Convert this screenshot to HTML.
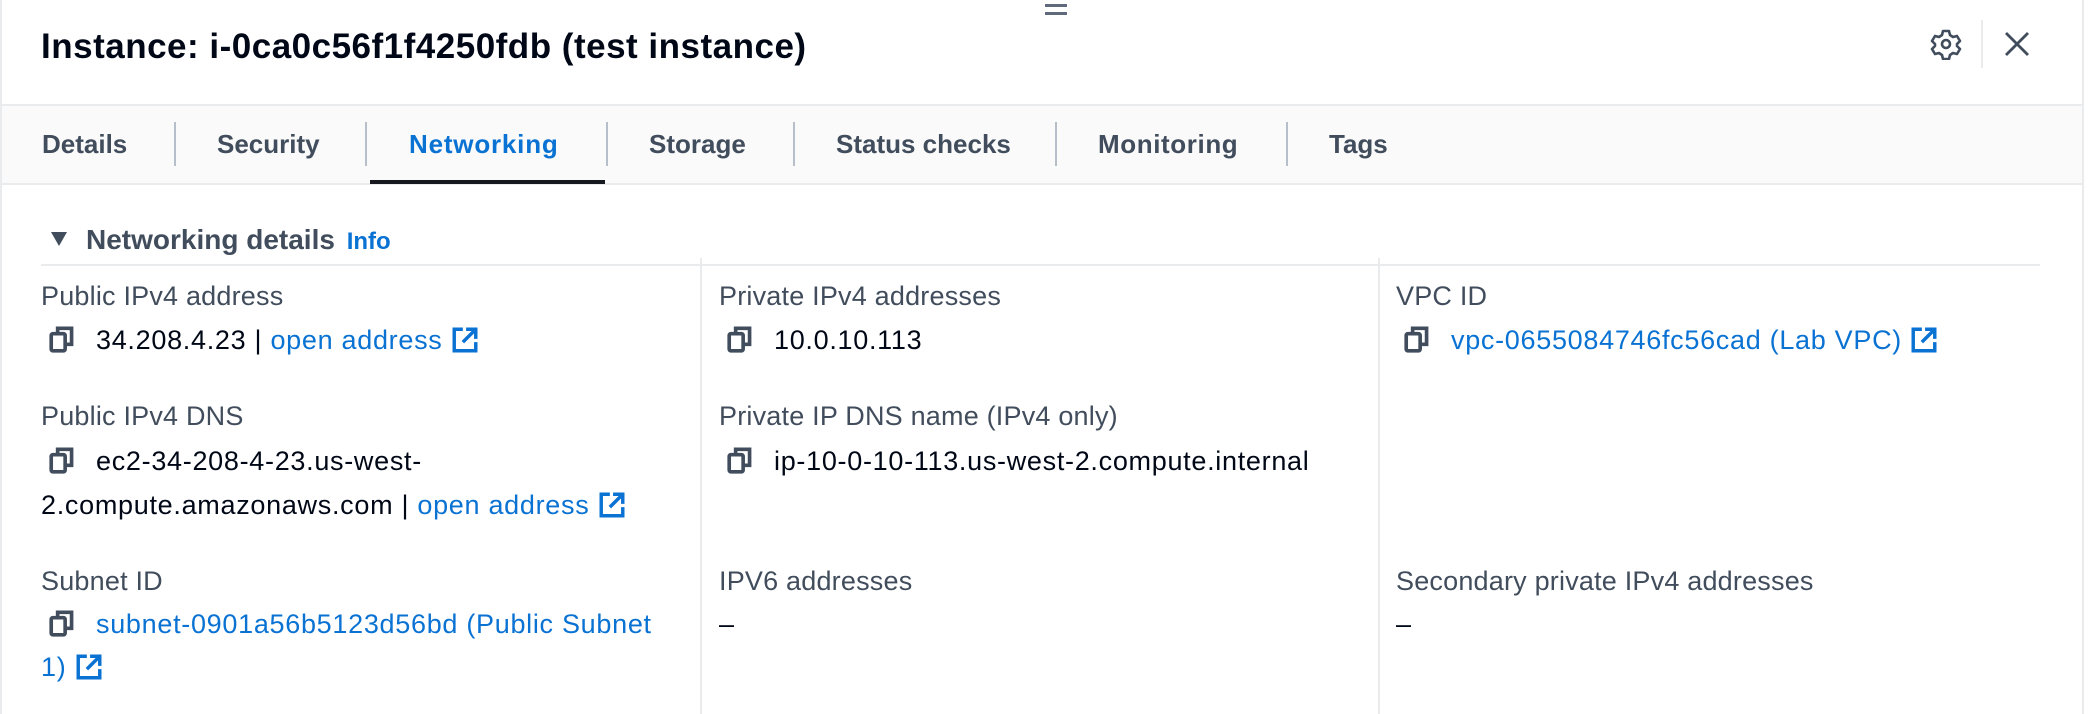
<!DOCTYPE html>
<html><head><meta charset="utf-8"><style>
*{margin:0;padding:0;box-sizing:border-box}
body{width:2090px;height:714px;background:#fff;font-family:"Liberation Sans",sans-serif;position:relative;overflow:hidden;color:#000716}
.a{position:absolute;white-space:nowrap;line-height:32px}
.t{font-size:35px;font-weight:bold;color:#000716;letter-spacing:0.5px}
.tab{font-size:26px;font-weight:bold;color:#414d5c;top:128px}
.div{position:absolute;top:122px;width:2px;height:44px;background:#b6bec9}
.lab{font-size:27px;color:#414d5c;letter-spacing:0.2px}
.val{font-size:27px;color:#000716;letter-spacing:0.7px}
.lnk{color:#0972d3}
.ic{display:inline-block;vertical-align:-5px}
.cpi{margin-right:18px}
</style></head><body>
<div style="position:absolute;left:0;top:0;width:2px;height:714px;background:#e9ebed"></div>
<div style="position:absolute;left:2082px;top:0;width:2px;height:714px;background:#e9ebed"></div>
<div style="position:absolute;left:1045px;top:4px;width:22px;height:3px;background:#5f6b7a"></div>
<div style="position:absolute;left:1045px;top:12px;width:22px;height:3px;background:#5f6b7a"></div>
<div class="a t" style="left:41px;top:31px">Instance: i-0ca0c56f1f4250fdb (test instance)</div>
<svg style="position:absolute;left:1930px;top:28px" width="32" height="32" viewBox="0 0 32 32"><path d="M13 3h6l1 4 3 2 4-1 3 5-3 3v2l3 3-3 5-4-1-3 2-1 4h-6l-1-4-3-2-4 1-3-5 3-3v-2l-3-3 3-5 4 1 3-2z" fill="none" stroke="#414d5c" stroke-width="2.6" stroke-linejoin="round"/><circle cx="16" cy="16" r="4" fill="none" stroke="#414d5c" stroke-width="2.6"/></svg>
<div style="position:absolute;left:1981px;top:20px;width:2px;height:48px;background:#e9ebed"></div>
<svg style="position:absolute;left:2003px;top:30px" width="28" height="28" viewBox="0 0 28 28"><path d="M3 3L25 25M25 3L3 25" stroke="#414d5c" stroke-width="2.8"/></svg>
<div style="position:absolute;left:2px;top:104px;width:2080px;height:81px;background:#fafafa;border-top:2px solid #e9ebed;border-bottom:2px solid #e9ebed"></div>
<div class="a tab" style="left:42px">Details</div>
<div class="div" style="left:174px"></div>
<div class="a tab" style="left:217px">Security</div>
<div class="div" style="left:365px"></div>
<div class="a tab" style="left:409px;color:#0972d3;letter-spacing:0.8px">Networking</div>
<div style="position:absolute;left:370px;top:180px;width:235px;height:4px;background:#16191f"></div>
<div class="div" style="left:606px"></div>
<div class="a tab" style="left:649px">Storage</div>
<div class="div" style="left:793px"></div>
<div class="a tab" style="left:836px">Status checks</div>
<div class="div" style="left:1055px"></div>
<div class="a tab" style="left:1098px;letter-spacing:0.6px">Monitoring</div>
<div class="div" style="left:1286px"></div>
<div class="a tab" style="left:1329px">Tags</div>
<svg style="position:absolute;left:50px;top:231px" width="18" height="16" viewBox="0 0 18 16"><path d="M1 1H17L9 15Z" fill="#414d5c"/></svg>
<div class="a" style="left:86px;top:224px;font-size:28px;font-weight:bold;color:#414d5c">Networking details <span style="font-size:24px;color:#0972d3;margin-left:4px">Info</span></div>
<div style="position:absolute;left:41px;top:264px;width:1999px;height:2px;background:#e9ebed"></div>
<div style="position:absolute;left:700px;top:258px;width:2px;height:456px;background:#e9ebed"></div>
<div style="position:absolute;left:1378px;top:258px;width:2px;height:456px;background:#e9ebed"></div>

<svg width="0" height="0" style="position:absolute"><defs>
<symbol id="cp" viewBox="0 0 28 28"><rect x="3" y="9" width="13" height="16" rx="1.5" fill="none" stroke="#414d5c" stroke-width="3.4"/><path d="M9 8V4h13v15h-5" fill="none" stroke="#414d5c" stroke-width="3.4"/></symbol>
<symbol id="ex" viewBox="0 0 26 26"><path d="M11 3H3v20h20v-8" fill="none" stroke="#0972d3" stroke-width="3.2"/><path d="M14 3h9v9M23 3L11 15" fill="none" stroke="#0972d3" stroke-width="3.2"/></symbol>
</defs></svg>

<div class="a lab" style="left:41px;top:280px">Public IPv4 address</div>
<div class="a val" style="left:48px;top:324px"><svg class="ic cpi" width="30" height="30"><use href="#cp"/></svg>34.208.4.23 | <span class="lnk">open address</span> <svg class="ic" width="28" height="28"><use href="#ex"/></svg></div>
<div class="a lab" style="left:41px;top:400px">Public IPv4 DNS</div>
<div class="a val" style="left:48px;top:445px"><svg class="ic cpi" width="30" height="30"><use href="#cp"/></svg>ec2-34-208-4-23.us-west-</div>
<div class="a val" style="left:41px;top:489px">2.compute.amazonaws.com | <span class="lnk">open address</span> <svg class="ic" width="28" height="28"><use href="#ex"/></svg></div>
<div class="a lab" style="left:41px;top:565px">Subnet ID</div>
<div class="a val lnk" style="left:48px;top:608px"><svg class="ic cpi" width="30" height="30"><use href="#cp"/></svg>subnet-0901a56b5123d56bd (Public Subnet</div>
<div class="a val lnk" style="left:41px;top:651px">1) <svg class="ic" width="28" height="28"><use href="#ex"/></svg></div>
<div class="a lab" style="left:719px;top:280px">Private IPv4 addresses</div>
<div class="a val" style="left:726px;top:324px"><svg class="ic cpi" width="30" height="30"><use href="#cp"/></svg>10.0.10.113</div>
<div class="a lab" style="left:719px;top:400px">Private IP DNS name (IPv4 only)</div>
<div class="a val" style="left:726px;top:445px"><svg class="ic cpi" width="30" height="30"><use href="#cp"/></svg>ip-10-0-10-113.us-west-2.compute.internal</div>
<div class="a lab" style="left:719px;top:565px">IPV6 addresses</div>
<div class="a val" style="left:719px;top:608px">–</div>
<div class="a lab" style="left:1396px;top:280px">VPC ID</div>
<div class="a val" style="left:1403px;top:324px"><svg class="ic cpi" width="30" height="30"><use href="#cp"/></svg><span class="lnk">vpc-0655084746fc56cad (Lab VPC)</span> <svg class="ic" width="28" height="28"><use href="#ex"/></svg></div>
<div class="a lab" style="left:1396px;top:565px">Secondary private IPv4 addresses</div>
<div class="a val" style="left:1396px;top:608px">–</div>
</body></html>
